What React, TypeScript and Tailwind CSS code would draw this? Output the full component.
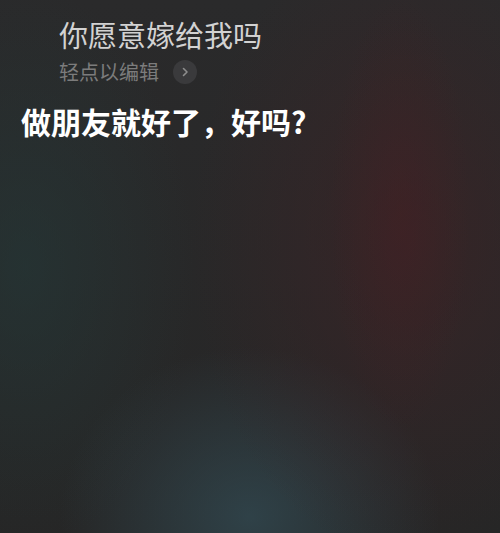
import React from 'react';

const bg =
  'bg-[radial-gradient(ellipse_70px_220px_at_80%_40%,rgba(75,30,34,0.35),transparent),radial-gradient(ellipse_220px_320px_at_82%_45%,rgba(62,34,37,0.65),transparent),radial-gradient(ellipse_190px_170px_at_50%_97%,rgba(52,80,90,0.65),transparent),radial-gradient(ellipse_170px_280px_at_5%_50%,rgba(35,58,58,0.55),transparent),linear-gradient(180deg,#2a2a2b,#262626)]';

export default function App() {
  return (
    <div
      className={`w-[500px] h-[533px] overflow-hidden ${bg}`}
      style={{ fontFamily: '"Noto Sans CJK SC", "Noto Sans", sans-serif' }}
    >
      <div className="pt-[15px] pl-[59px]">
        <p className="text-[29px] leading-[38px] text-[#d2d2d2]">你愿意嫁给我吗</p>
        <div className="flex items-center mt-[6px] gap-[14px]">
          <span className="text-[20px] leading-[26px] text-[#7c7c7c]">轻点以编辑</span>
          <span className="w-[24px] h-[24px] rounded-full bg-[#3a3a3c] flex items-center justify-center">
            <svg width="10" height="10" viewBox="0 0 10 10" fill="none">
              <path d="M3.5 1.5 L7 5 L3.5 8.5" stroke="#8d8d8d" strokeWidth="1.6" strokeLinecap="round" strokeLinejoin="round" />
            </svg>
          </span>
        </div>
      </div>
      <p className="pl-[21px] mt-[16px] text-[30px] leading-[40px] font-semibold text-white">做朋友就好了，好吗?</p>
    </div>
  );
}
